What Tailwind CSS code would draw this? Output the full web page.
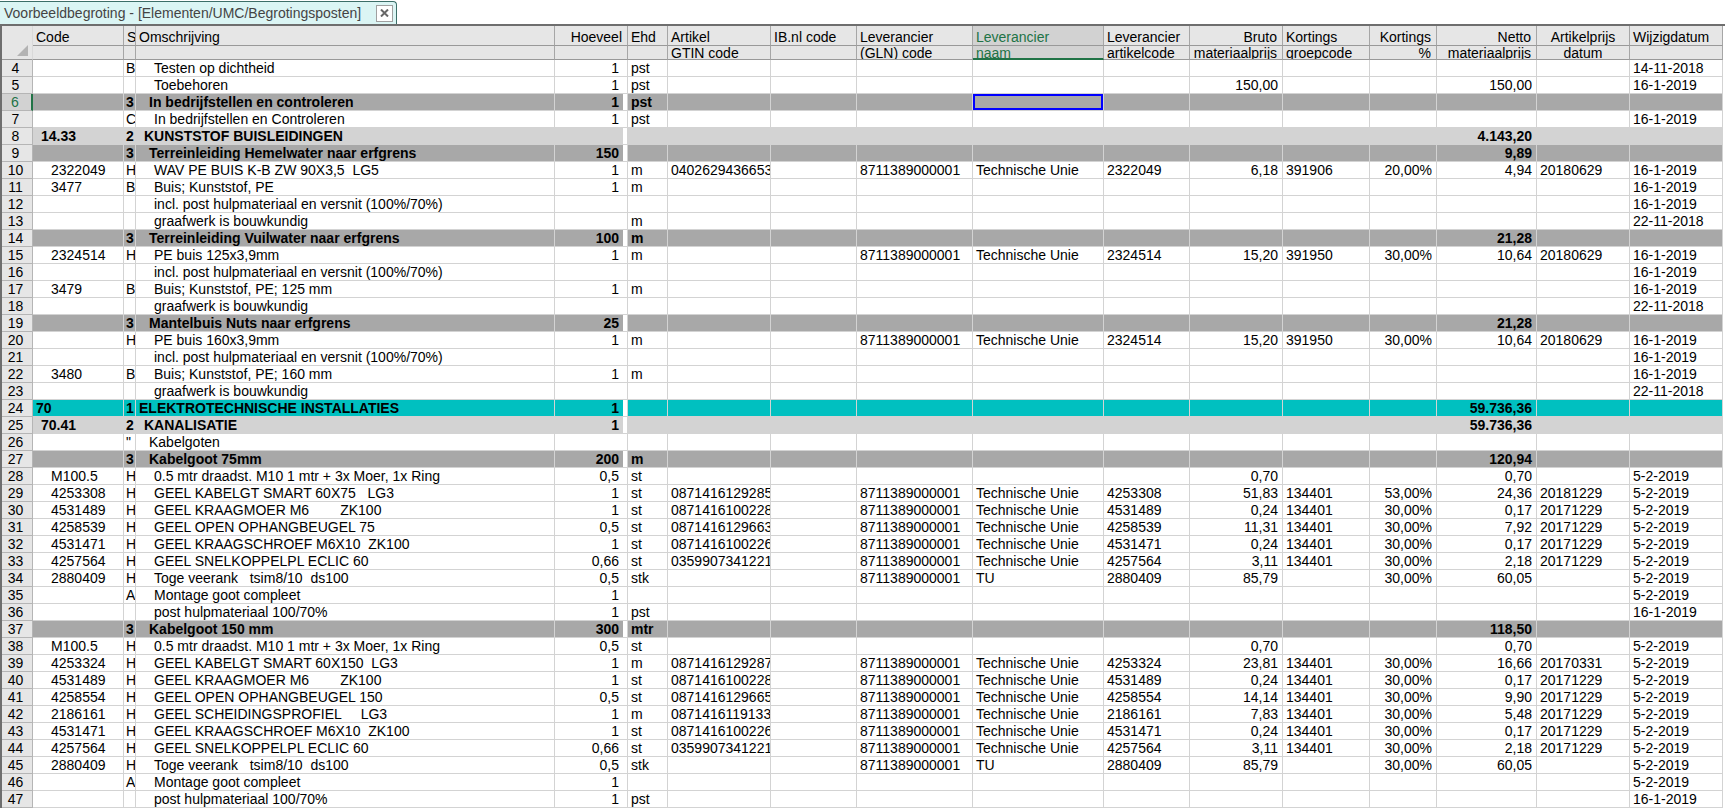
<!DOCTYPE html>
<html lang="nl">
<head>
<meta charset="utf-8">
<title>Voorbeeldbegroting</title>
<script src="https://cdn.jsdelivr.net/npm/@tailwindcss/browser@4"></script>
</head>
<body class="bg-white text-black text-sm font-['Liberation_Sans',Arial,sans-serif]">
<div class="h-6 flex items-end">
  <div class="h-[23px] flex items-center gap-[15px] pl-1 pr-[3px] bg-[#dbf5f4] border-t border-r border-[#3c6e68] rounded-tr-sm text-[#444]">
    <span class="text-sm leading-5 whitespace-nowrap">Voorbeeldbegroting - [Elementen/UMC/Begrotingsposten]</span>
    <button type="button" aria-label="Sluiten" class="size-[17px] bg-white border border-[#a0a0a0] flex items-center justify-center">
      <svg class="w-[9px] h-2" viewBox="0 0 9 8" stroke="#666" stroke-width="2"><path d="M1 .5L8 7.500M8 .5L1 7.500"/></svg>
    </button>
  </div>
</div>
<div class="border-t-2 border-[#6e6e6e] border-l-2 pr-[2px]">
<table class="w-full table-fixed border-separate border-spacing-0">
  <colgroup>
    <col class="w-[31px]"><col class="w-[91px]"><col class="w-[12px]"><col><col class="w-[73px]"><col class="w-[40px]"><col class="w-[103px]"><col class="w-[86px]"><col class="w-[116px]"><col class="w-[131px]"><col class="w-[86px]"><col class="w-[93px]"><col class="w-[87px]"><col class="w-[67px]"><col class="w-[100px]"><col class="w-[93px]"><col class="w-[93px]">
  </colgroup>
  <thead id="head"></thead>
  <tbody id="body"></tbody>
</table>
</div>
<script>
const heads = [
  ['Code',''],['S',''],['Omschrijving',''],['Hoeveel','','r'],['Ehd',''],['Artikel','GTIN code'],['IB.nl code',''],
  ['Leverancier','(GLN) code'],['Leverancier','naam'],['Leverancier','artikelcode'],['Bruto','materiaalprijs','r'],
  ['Kortings','groepcode'],['Kortings','%','r'],['Netto','materiaalprijs','r'],['Artikelprijs','datum','c'],['Wijzigdatum','']
];
const headAlign = { r: 'text-right pr-[5px]', c: 'text-center', l: 'text-left pl-[3px]' };
const corner = '<th rowspan="2" class="p-0 bg-[#e6e6e6] border-r border-b border-r-[#d9d9d9] border-b-[#999] align-bottom"><svg class="ml-auto mr-1 mb-[3px] size-[11px]" viewBox="0 0 11 11"><path d="M11 0V11H0Z" fill="#b3b3b3"/></svg></th>';
function headRow(line) {
  return heads.map((h, i) => {
    const active = i === 8;
    const tone = active ? 'bg-[#d2d2d2] text-[#217346]' : 'bg-[#e6e6e6]';
    const edge = line === 0 ? 'border-b border-b-[#999]' : active ? 'border-b-2 border-b-[#217346]' : 'border-b border-b-[#999]';
    const box = line === 0 ? 'h-[19px] pt-[2px] leading-[18px]' : active ? 'h-3 leading-[14px]' : 'h-[13px] leading-[14px]';
    return `<th class="p-0 font-normal border-r border-r-[#a6a6a6] ${edge} ${tone}"><div class="${box} overflow-hidden whitespace-nowrap ${headAlign[h[2] || 'l']}">${h[line]}</div></th>`;
  }).join('');
}
document.getElementById('head').innerHTML = `<tr>${corner}${headRow(0)}</tr><tr>${headRow(1)}</tr>`;

/* level | code | type | description | quantity | unit | gtin | supplier gln | supplier | article | gross | group | discount | net | price date | changed */
const data = `
4||B|Testen op dichtheid|1|pst||||||||||14-11-2018
4|||Toebehoren|1|pst|||||150,00|||150,00||16-1-2019
3||3|In bedrijfstellen en controleren|1|pst||||||||||
4||C|In bedrijfstellen en Controleren|1|pst||||||||||16-1-2019
2|14.33|2|KUNSTSTOF BUISLEIDINGEN||||||||||4.143,20||
3||3|Terreinleiding Hemelwater naar erfgrens|150|||||||||9,89||
4|2322049|H|WAV PE BUIS K-B ZW 90X3,5  LG5|1|m|0402629436653|8711389000001|Technische Unie|2322049|6,18|391906|20,00%|4,94|20180629|16-1-2019
4|3477|B|Buis; Kunststof, PE|1|m||||||||||16-1-2019
4|||incl. post hulpmateriaal en versnit (100%/70%)||||||||||||16-1-2019
4|||graafwerk is bouwkundig||m||||||||||22-11-2018
3||3|Terreinleiding Vuilwater naar erfgrens|100|m||||||||21,28||
4|2324514|H|PE buis 125x3,9mm|1|m||8711389000001|Technische Unie|2324514|15,20|391950|30,00%|10,64|20180629|16-1-2019
4|||incl. post hulpmateriaal en versnit (100%/70%)||||||||||||16-1-2019
4|3479|B|Buis; Kunststof, PE; 125 mm|1|m||||||||||16-1-2019
4|||graafwerk is bouwkundig||||||||||||22-11-2018
3||3|Mantelbuis Nuts naar erfgrens|25|||||||||21,28||
4||H|PE buis 160x3,9mm|1|m||8711389000001|Technische Unie|2324514|15,20|391950|30,00%|10,64|20180629|16-1-2019
4|||incl. post hulpmateriaal en versnit (100%/70%)||||||||||||16-1-2019
4|3480|B|Buis; Kunststof, PE; 160 mm|1|m||||||||||16-1-2019
4|||graafwerk is bouwkundig||||||||||||22-11-2018
1|70|1|ELEKTROTECHNISCHE INSTALLATIES|1|||||||||59.736,36||
2|70.41|2|KANALISATIE|1|||||||||59.736,36||
5||"|Kabelgoten||||||||||||
3||3|Kabelgoot 75mm|200|m||||||||120,94||
4|M100.5|H|0.5 mtr draadst. M10 1 mtr + 3x Moer, 1x Ring|0,5|st|||||0,70|||0,70||5-2-2019
4|4253308|H|GEEL KABELGT SMART 60X75   LG3|1|st|0871416129285|8711389000001|Technische Unie|4253308|51,83|134401|53,00%|24,36|20181229|5-2-2019
4|4531489|H|GEEL KRAAGMOER M6        ZK100|1|st|0871416100228|8711389000001|Technische Unie|4531489|0,24|134401|30,00%|0,17|20171229|5-2-2019
4|4258539|H|GEEL OPEN OPHANGBEUGEL 75|0,5|st|0871416129663|8711389000001|Technische Unie|4258539|11,31|134401|30,00%|7,92|20171229|5-2-2019
4|4531471|H|GEEL KRAAGSCHROEF M6X10  ZK100|1|st|0871416100226|8711389000001|Technische Unie|4531471|0,24|134401|30,00%|0,17|20171229|5-2-2019
4|4257564|H|GEEL SNELKOPPELPL ECLIC 60|0,66|st|0359907341221|8711389000001|Technische Unie|4257564|3,11|134401|30,00%|2,18|20171229|5-2-2019
4|2880409|H|Toge veerank   tsim8/10  ds100|0,5|stk||8711389000001|TU|2880409|85,79||30,00%|60,05||5-2-2019
4||A|Montage goot compleet|1|||||||||||5-2-2019
4|||post hulpmateriaal 100/70%|1|pst||||||||||16-1-2019
3||3|Kabelgoot 150 mm|300|mtr||||||||118,50||
4|M100.5|H|0.5 mtr draadst. M10 1 mtr + 3x Moer, 1x Ring|0,5|st|||||0,70|||0,70||5-2-2019
4|4253324|H|GEEL KABELGT SMART 60X150  LG3|1|m|0871416129287|8711389000001|Technische Unie|4253324|23,81|134401|30,00%|16,66|20170331|5-2-2019
4|4531489|H|GEEL KRAAGMOER M6        ZK100|1|st|0871416100228|8711389000001|Technische Unie|4531489|0,24|134401|30,00%|0,17|20171229|5-2-2019
4|4258554|H|GEEL OPEN OPHANGBEUGEL 150|0,5|st|0871416129665|8711389000001|Technische Unie|4258554|14,14|134401|30,00%|9,90|20171229|5-2-2019
4|2186161|H|GEEL SCHEIDINGSPROFIEL     LG3|1|m|0871416119133|8711389000001|Technische Unie|2186161|7,83|134401|30,00%|5,48|20171229|5-2-2019
4|4531471|H|GEEL KRAAGSCHROEF M6X10  ZK100|1|st|0871416100226|8711389000001|Technische Unie|4531471|0,24|134401|30,00%|0,17|20171229|5-2-2019
4|4257564|H|GEEL SNELKOPPELPL ECLIC 60|0,66|st|0359907341221|8711389000001|Technische Unie|4257564|3,11|134401|30,00%|2,18|20171229|5-2-2019
4|2880409|H|Toge veerank   tsim8/10  ds100|0,5|stk||8711389000001|TU|2880409|85,79||30,00%|60,05||5-2-2019
4||A|Montage goot compleet|1|||||||||||5-2-2019
4|||post hulpmateriaal 100/70%|1|pst||||||||||16-1-2019`.trim().split('\n');

const fill = { 1: 'bg-[#00c0c0]', 2: 'bg-[#d3d3d3]', 3: 'bg-[#a8a8a8]', 4: 'bg-white', 5: 'bg-white' };
const indent = { 1: 'pl-[3px]', 2: 'pl-2', 3: 'pl-[13px]', 4: 'pl-[18px]', 5: 'pl-[13px]' };
const rightAligned = [3, 10, 12, 13];
document.getElementById('body').innerHTML = data.map((line, r) => {
  const [level, ...f] = line.split('|');
  f.splice(6, 0, ''); /* IB.nl code is empty throughout */
  const n = r + 4, bg = fill[level], weight = level < 4 ? 'font-bold' : '';
  const cells = f.map((v, i) => {
    const pad = rightAligned.includes(i) ? 'text-right pr-1' : i === 0 || i === 2 ? indent[level] : i === 1 ? 'pl-[2px]' : 'pl-[3px]';
    const selected = n === 6 && i === 8 ? 'border-2 border-[#0000ff]' : '';
    const outer = i === 3 ? 'bg-white pr-1' : `${bg} pr-0`;
    const inner = i === 3 ? bg : '';
    return `<td class="py-0 pl-0 border-r border-b border-[#d3d3d3] ${outer}"><div class="h-4 leading-4 overflow-hidden whitespace-pre ${pad} ${inner} ${selected}">${v}</div></td>`;
  }).join('');
  const rowHead = n === 6 ? 'bg-[#d2d2d2] text-[#217346] border-r-2 border-r-[#217346]' : 'bg-[#e6e6e6] border-r border-r-[#b5b5b5]';
  return `<tr class="${weight}"><th scope="row" class="p-0 font-normal border-b border-b-[#b5b5b5] ${rowHead}"><div class="h-4 leading-4 pr-[3px]">${n}</div></th>${cells}</tr>`;
}).join('');
</script>
</body>
</html>
